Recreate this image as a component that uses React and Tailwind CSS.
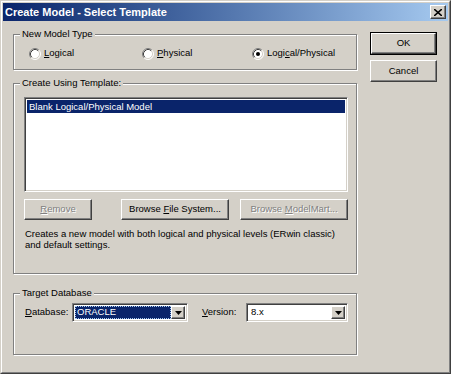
import React from 'react';

const raised =
  'border border-t-white border-l-white border-r-[#404040] border-b-[#404040] shadow-[inset_-1px_-1px_0_#808080]';
const sunken =
  'border border-t-[#808080] border-l-[#808080] border-r-white border-b-white shadow-[inset_1px_1px_0_#404040,inset_-1px_-1px_0_#d4d0c8]';
const etched =
  'border border-[#808080] shadow-[inset_1px_1px_0_#fff,1px_1px_0_#fff]';

const Radio = ({ checked }) => (
  <svg width="12" height="12" viewBox="0 0 12 12" className="shrink-0">
    <circle cx="6" cy="6" r="5" fill="#fff" />
    <path d="M2.11 9.89 A5.5 5.5 0 0 1 9.89 2.11" stroke="#808080" fill="none" />
    <path d="M2.82 9.18 A4.5 4.5 0 0 1 9.18 2.82" stroke="#404040" fill="none" />
    <path d="M9.89 2.11 A5.5 5.5 0 0 1 2.11 9.89" stroke="#fff" fill="none" />
    <path d="M9.18 2.82 A4.5 4.5 0 0 1 2.82 9.18" stroke="#d4d0c8" fill="none" />
    {checked && <circle cx="6" cy="6" r="2" fill="#000" />}
  </svg>
);

// etched group box, the legend sits on the top line
const Group = ({ title, className, children }) => (
  <fieldset className={`${etched} ${className}`}>
    <legend className="ml-[6px] px-[2px] leading-[12px] bg-[#d4d0c8]">{title}</legend>
    {children}
  </fieldset>
);

const Button = ({ children, disabled, className }) => (
  <div
    className={`${raised} h-[21px] flex items-center justify-center ${
      disabled ? 'text-[#808080] [text-shadow:1px_1px_0_#fff]' : ''
    } ${className}`}
  >
    {children}
  </div>
);

const DropArrow = () => (
  <div className={`${raised} w-[14px] h-full flex items-center justify-center bg-[#d4d0c8]`}>
    <svg width="7" height="4" viewBox="0 0 7 4">
      <path d="M0 0H7L3.5 4Z" fill="#000" />
    </svg>
  </div>
);

export default function App() {
  return (
    <div className="w-[451px] h-[374px] bg-[#d4d0c8] border border-t-[#d4d0c8] border-l-[#d4d0c8] border-r-[#404040] border-b-[#404040] font-['Liberation_Sans',Arial,sans-serif] text-[9.5px] text-black overflow-hidden select-none">
      <div className="h-full border border-t-white border-l-white border-r-[#808080] border-b-[#808080] p-[1px] flex flex-col">
        <div className="h-[18px] shrink-0 flex items-center pl-[2px] pr-[2px] bg-gradient-to-r from-[#0a246a] to-[#a6caf0]">
          <span className="text-white font-bold text-[11px] leading-none">Create Model - Select Template</span>
          <div className={`${raised} ml-auto w-[16px] h-[14px] bg-[#d4d0c8] flex items-center justify-center`}>
            <svg width="8" height="7" viewBox="0 0 8 7">
              <path d="M0 0L8 7M8 0L0 7" stroke="#000" strokeWidth="1.6" />
            </svg>
          </div>
        </div>

        <div className="flex pl-[10px]">
          <div className="w-[344px] flex flex-col">
            <Group title="New Model Type" className="mt-[7px]">
              <div className="flex items-center h-[13px] mt-[7px] mb-[9px]">
                <label className="flex items-center gap-[3px] w-[128px] pl-[15px]">
                  <Radio />
                  <span><u>L</u>ogical</span>
                </label>
                <label className="flex items-center gap-[3px] w-[110px]">
                  <Radio />
                  <span><u>P</u>hysical</span>
                </label>
                <label className="flex items-center gap-[3px]">
                  <Radio checked />
                  <span>Logi<u>c</u>al/Physical</span>
                </label>
              </div>
            </Group>

            <Group title="Create Using Template:" className="mt-[7px]">
              <div className="pt-[8px] pb-[23px] pl-[10px] pr-[8px]">
                <div className={`${sunken} h-[95px] bg-white p-[2px]`}>
                  <div className="h-[13px] bg-[#0a246a] text-white pl-[2px] leading-[13px]">
                    Blank Logical/Physical Model
                  </div>
                </div>
                <div className="flex mt-[7px]">
                  <Button disabled className="w-[68px]"><span><u>R</u>emove</span></Button>
                  <Button className="w-[108px] ml-[29px]"><span>Browse <u>F</u>ile System...</span></Button>
                  <Button disabled className="w-[108px] ml-[11px]"><span>Browse <u>M</u>odelMart...</span></Button>
                </div>
                <p className="mt-[8px] leading-[11px] pl-[1px]">
                  Creates a new model with both logical and physical levels (ERwin classic)
                  <br />
                  and default settings.
                </p>
              </div>
            </Group>

            <Group title="Target Database" className="mt-[13px]">
              <div className="flex items-center h-[19px] mt-[4px] mb-[32px] ml-[11px]">
                <span className="w-[47px]"><u>D</u>atabase:</span>
                <div className={`${sunken} w-[116px] h-[19px] bg-white p-[2px] flex`}>
                  <div className="flex-1 bg-[#0a246a] text-white pl-[2px] flex items-center outline outline-1 outline-dotted outline-[#a6caf0] -outline-offset-1">
                    ORACLE
                  </div>
                  <DropArrow />
                </div>
                <span className="ml-[14px] w-[44px]"><u>V</u>ersion:</span>
                <div className={`${sunken} w-[102px] h-[19px] bg-white p-[2px] flex`}>
                  <div className="flex-1 pl-[2px] flex items-center">8.x</div>
                  <DropArrow />
                </div>
              </div>
            </Group>
          </div>

          <div className="ml-[13px] w-[67px] flex flex-col pt-[11px]">
            <div className="border border-black">
              <Button className="h-[19px]">OK</Button>
            </div>
            <Button className="mt-[5px] h-[22px]">Cancel</Button>
          </div>
        </div>
      </div>
    </div>
  );
}
